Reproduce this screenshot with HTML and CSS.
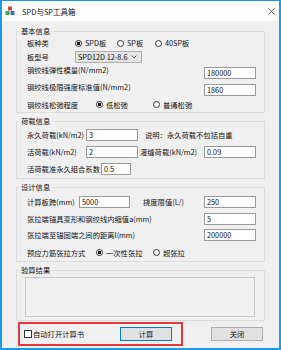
FILE: index.html
```html
<!DOCTYPE html>
<html lang="zh">
<head>
  <meta charset="UTF-8">
  <title>SPD与SP工具箱</title>
  <link rel="stylesheet" href="styles.css">
</head>
<body>
  <div class="window">
    <div class="titlebar">
      <svg class="app-icon" viewBox="0 0 10 10">
        <rect x="3" y="0.5" width="4" height="4" fill="#d9453a"/>
        <rect x="0.5" y="5" width="4" height="4" fill="#4aa34a"/>
        <rect x="5.5" y="5" width="4" height="4" fill="#3a6fd0"/>
      </svg>
      <span class="title">SPD与SP工具箱</span>
      <svg class="close" viewBox="0 0 8 8"><path d="M0.5 0.5L7.5 7.5M7.5 0.5L0.5 7.5" stroke="#222" stroke-width="0.8"/></svg>
    </div>

    <div class="content">
      <fieldset class="group">
        <legend>基本信息</legend>
        <div class="row h14">
          <span class="lbl w48">板种类</span>
          <label class="opt w42"><input type="radio" name="kind" checked>SPD板</label>
          <label class="opt w38"><input type="radio" name="kind">SP板</label>
          <label class="opt"><input type="radio" name="kind">40SP板</label>
        </div>
        <div class="row h14">
          <span class="lbl w48">板型号</span>
          <div class="combo"><span>SPD12D 12-8.6</span>
            <svg viewBox="0 0 6 4"><path d="M0.5 0.5L3 3L5.5 0.5" fill="none" stroke="#333" stroke-width="0.7"/></svg>
          </div>
        </div>
        <div class="row top h17">
          <span class="lbl">钢绞线弹性模量(N/mm2)</span>
          <input class="txt wide" type="text" value="180000">
        </div>
        <div class="row top h16">
          <span class="lbl">钢绞线极限强度标准值(N/mm2)</span>
          <input class="txt wide" type="text" value="1860">
        </div>
        <div class="row h15">
          <span class="lbl w69">钢绞线松弛程度</span>
          <label class="opt w57"><input type="radio" name="relax" checked>低松弛</label>
          <label class="opt"><input type="radio" name="relax">普通松弛</label>
        </div>
      </fieldset>

      <fieldset class="group">
        <legend>荷载信息</legend>
        <div class="row h18">
          <span class="lbl w59">永久荷载(kN/m2)</span>
          <input class="txt w52" type="text" value="3">
          <span class="note">说明：永久荷载不包括自重</span>
        </div>
        <div class="row h16">
          <span class="lbl w59">活荷载(kN/m2)</span>
          <input class="txt w52" type="text" value="2">
          <span class="lbl2">灌缝荷载(kN/m2)</span>
          <input class="txt wide" type="text" value="0.09">
        </div>
        <div class="row h18">
          <span class="lbl w74">活荷载准永久组合系数</span>
          <input class="txt w30" type="text" value="0.5">
        </div>
      </fieldset>

      <fieldset class="group">
        <legend>设计信息</legend>
        <div class="row h20">
          <span class="lbl w52">计算板跨(mm)</span>
          <input class="txt w51" type="text" value="5000">
          <span class="lbl2 gap13">挠度限值(L/)</span>
          <input class="txt wide" type="text" value="250">
        </div>
        <div class="row h14">
          <span class="lbl">张拉端锚具变形和钢绞线内缩值a(mm)</span>
          <input class="txt wide" type="text" value="5">
        </div>
        <div class="row h18">
          <span class="lbl">张拉端至锚固端之间的距离l(mm)</span>
          <input class="txt wide" type="text" value="200000">
        </div>
        <div class="row h17">
          <span class="lbl w69">预应力筋张拉方式</span>
          <label class="opt w57"><input type="radio" name="tension" checked>一次性张拉</label>
          <label class="opt"><input type="radio" name="tension">超张拉</label>
        </div>
      </fieldset>

      <fieldset class="group">
        <legend>验算结果</legend>
        <div class="result-box"></div>
      </fieldset>

      <div class="footer">
        <div class="mark">
          <label class="check"><input type="checkbox">自动打开计算书</label>
          <button class="btn default">计算</button>
        </div>
        <button class="btn">关闭</button>
      </div>
    </div>
  </div>
</body>
</html>
```

FILE: styles.css
```css
* { margin:0; padding:0; box-sizing:border-box; }
body { font-family:"Noto Sans CJK SC","Microsoft YaHei",sans-serif; font-size:7.3px; color:#111; background:#fff; }

.window { width:281px; height:350px; border:2px solid #1c9ae3; border-top-width:1px; background:#f0f0f0;
          display:flex; flex-direction:column; }
.titlebar { height:20px; background:#fff; display:flex; align-items:center; padding:0 4px 0 3px; }
.app-icon { width:10px; height:10px; }
.title { flex:1; margin-left:7px; font-size:7.5px; }
.close { width:7px; height:7px; }

.content { padding:5px 14px 0 14px; }
.group { border:1px solid #dcdcdc; margin-top:3px; }
.group:first-child { margin-top:0; }
.group legend { margin-left:2px; padding:0 2px; line-height:10px; }

.row { display:flex; align-items:center; padding:0 8px 0 10px; white-space:nowrap; }
.row.top { align-items:flex-start; }
.row.top .lbl { line-height:12px; }
.row.top .txt { margin-top:3px; }
.h14 { height:14px; } .h15 { height:15px; } .h16 { height:16px; }
.h17 { height:17px; } .h18 { height:18px; } .h20 { height:20px; }

.lbl { flex-shrink:0; }
.w48 { width:48px; } .w52 { width:52px; } .w59 { width:59px; }
.w69 { width:69px; } .w74 { width:74px; }
.lbl2 { margin-left:2px; }
.gap13 { margin-left:13px; }
.note { margin-left:7px; }

.opt { display:flex; align-items:center; }
.opt.w42 { width:42px; } .opt.w38 { width:38px; } .opt.w57 { width:57px; }
.opt input { appearance:none; width:7px; height:7px; border:1px solid #333; border-radius:50%;
             background:#fff; margin-right:3px; flex-shrink:0; }
.opt input:checked { background:radial-gradient(circle, #111 0 1.4px, #fff 1.8px); }

.combo { width:67px; height:12px; border:1px solid #adadad; background:#e5e5e5; display:flex;
         align-items:center; justify-content:space-between; padding:0 4px 0 2px; }
.combo svg { width:6px; height:4px; }

.txt { height:12px; border:1px solid #9a9a9a; background:#fff; font:inherit; color:#111;
       padding:0 2px; outline:none; }
.txt.wide { width:52px; margin-left:auto; }
.txt.w52 { width:52px; } .txt.w51 { width:51px; } .txt.w30 { width:30px; }

.result-box { height:40px; margin:2px 9px 3px 8px; border:1px solid #c8c8c8; }

.footer { display:flex; align-items:center; margin-top:1px; }
.mark { width:165px; height:24px; margin-left:2px; border:2px solid #e8383d; display:flex;
        align-items:center; justify-content:space-between; padding:0 9px 0 4px; }
.check { display:flex; align-items:center; white-space:nowrap; }
.check input { appearance:none; width:8px; height:8px; border:1px solid #333; background:#fff; margin-right:1px; }
.btn { width:52px; height:14px; border:1px solid #adadad; background:#e1e1e1; font:inherit; color:#111; }
.btn.default { border-color:#0078d7; }
.footer > .btn { margin-left:auto; margin-right:2px; }
```
